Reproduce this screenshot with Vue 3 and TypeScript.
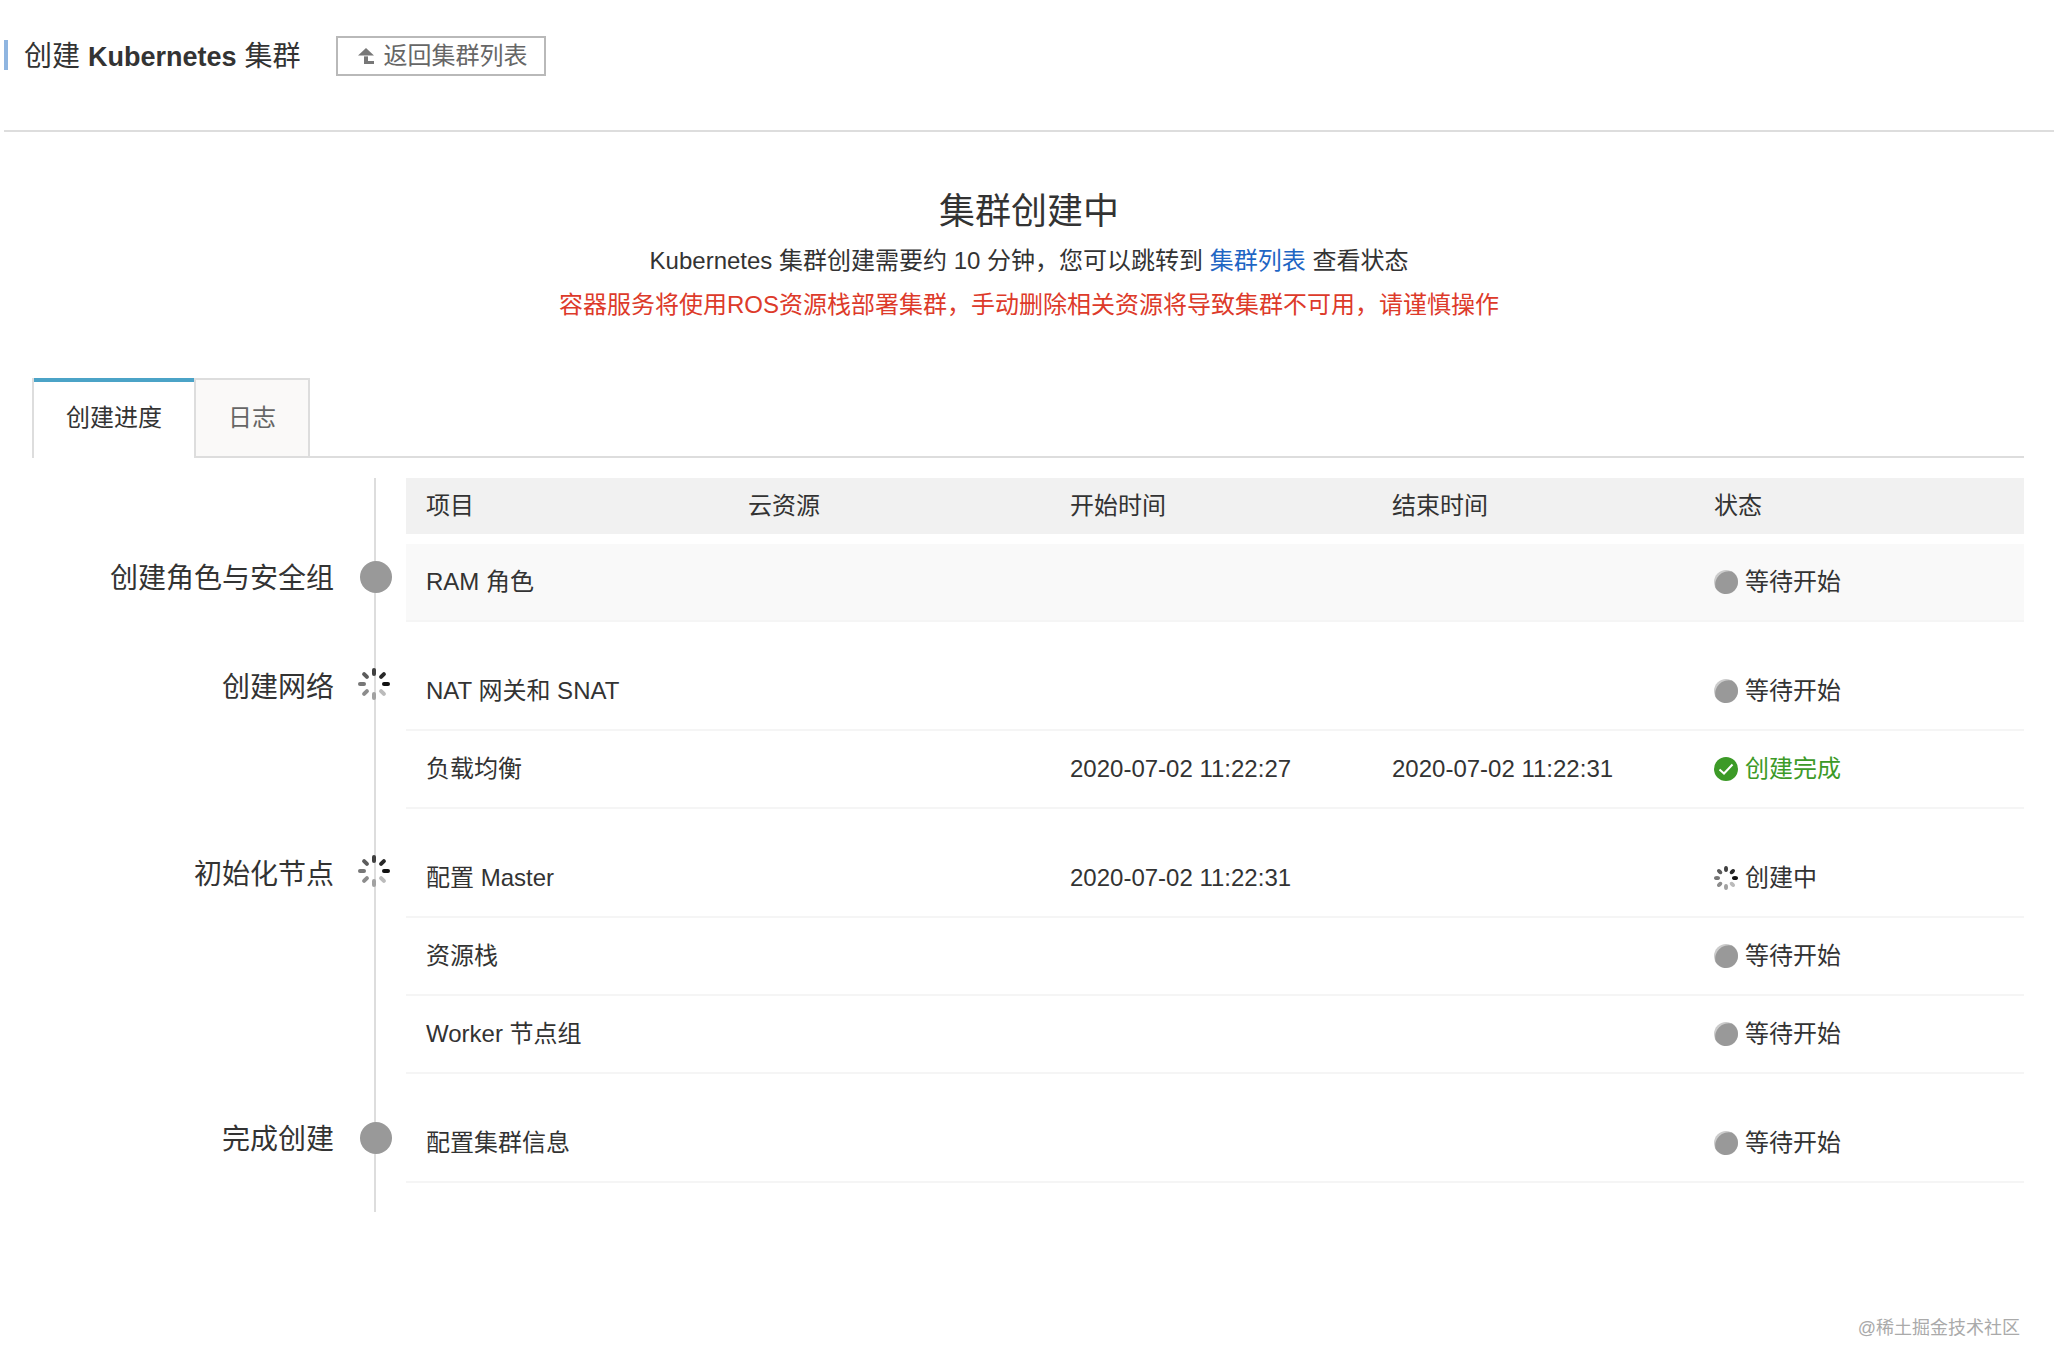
<script setup lang="ts">
import { ref } from 'vue'

type Status = 'waiting' | 'running' | 'done'

interface Item {
  name: string
  resource?: string
  start?: string
  end?: string
  status: Status
}

interface Stage {
  name: string
  status: Status
  items: Item[]
}

const statusText: Record<Status, string> = {
  waiting: '等待开始',
  running: '创建中',
  done: '创建完成',
}

const columns = ['项目', '云资源', '开始时间', '结束时间', '状态']

const stages: Stage[] = [
  { name: '创建角色与安全组', status: 'waiting', items: [{ name: 'RAM 角色', status: 'waiting' }] },
  {
    name: '创建网络',
    status: 'running',
    items: [
      { name: 'NAT 网关和 SNAT', status: 'waiting' },
      { name: '负载均衡', start: '2020-07-02 11:22:27', end: '2020-07-02 11:22:31', status: 'done' },
    ],
  },
  {
    name: '初始化节点',
    status: 'running',
    items: [
      { name: '配置 Master', start: '2020-07-02 11:22:31', status: 'running' },
      { name: '资源栈', status: 'waiting' },
      { name: 'Worker 节点组', status: 'waiting' },
    ],
  },
  { name: '完成创建', status: 'waiting', items: [{ name: '配置集群信息', status: 'waiting' }] },
]

const tabs = ['创建进度', '日志']
const activeTab = ref(0)

// Spinner blades, clockwise from the right-hand one
const blades = ['#111', '#bbb', '#a2a2a2', '#8c8c8c', '#777', '#5c5c5c', '#404040', '#282828']
</script>

<template>
  <div class="page">
    <header class="header">
      <h1 class="title">创建 <strong>Kubernetes</strong> 集群</h1>
      <button type="button" class="back">
        <svg width="16" height="16" viewBox="0 0 16 16" aria-hidden="true">
          <path d="M8 0 16 7.500H0Z" fill="#777" />
          <path d="M6 7H10V8.500H6Z" fill="#bbb" />
          <path d="M6 8.500H10V13H16V16H6Z" fill="#777" />
        </svg>
        返回集群列表
      </button>
    </header>

    <section class="intro">
      <h2 class="intro-title">集群创建中</h2>
      <p class="intro-line">Kubernetes 集群创建需要约 10 分钟，您可以跳转到 <a href="#clusters">集群列表</a> 查看状态</p>
      <p class="intro-line warning">容器服务将使用ROS资源栈部署集群，手动删除相关资源将导致集群不可用，请谨慎操作</p>
    </section>

    <main class="content">
      <div class="tabs" role="tablist">
        <button
          v-for="(tab, i) in tabs"
          :key="tab"
          type="button"
          role="tab"
          class="tab"
          :class="{ active: activeTab === i }"
          :aria-selected="activeTab === i"
          @click="activeTab = i"
        >{{ tab }}</button>
      </div>

      <div class="timeline">
        <table class="progress">
          <colgroup>
            <col class="col-stage" />
            <col class="col-marker" />
            <col v-for="n in 4" :key="n" class="col-data" />
            <col />
          </colgroup>
          <thead>
            <tr>
              <td></td>
              <td></td>
              <th v-for="column in columns" :key="column" scope="col">{{ column }}</th>
            </tr>
          </thead>
          <tbody v-for="(stage, s) in stages" :key="stage.name" :class="{ highlighted: s === 0 }">
            <tr v-for="(item, i) in stage.items" :key="item.name">
              <th v-if="i === 0" class="stage" scope="rowgroup" :rowspan="stage.items.length">{{ stage.name }}</th>
              <td v-if="i === 0" class="marker" :class="stage.status" :rowspan="stage.items.length">
                <svg v-if="stage.status === 'running'" width="32" height="32" viewBox="0 0 32 32" aria-hidden="true">
                  <rect
                    v-for="(color, b) in blades"
                    :key="b"
                    x="24"
                    y="14"
                    width="8"
                    height="4"
                    rx="2"
                    :fill="color"
                    :transform="`rotate(${b * 45} 16 16)`"
                  />
                </svg>
                <svg v-else width="32" height="32" viewBox="0 0 32 32" aria-hidden="true">
                  <circle cx="16" cy="16" r="16" fill="#999" />
                </svg>
              </td>
              <td class="cell">{{ item.name }}</td>
              <td class="cell">{{ item.resource }}</td>
              <td class="cell">{{ item.start }}</td>
              <td class="cell">{{ item.end }}</td>
              <td class="cell">
                <span class="status" :class="item.status">
                  <svg width="24" height="24" viewBox="0 0 24 24" aria-hidden="true">
                    <template v-if="item.status === 'waiting'">
                      <circle cx="12" cy="12" r="12" fill="#ccc" />
                      <path d="M18 1.600A12 12 0 1 1 1.600 18A13.500 13.500 0 0 1 18 1.600Z" fill="#999" />
                    </template>
                    <template v-else-if="item.status === 'done'">
                      <circle cx="12" cy="12" r="12" fill="#3c9a27" />
                      <path d="M5.500 12.500 10 16.500 18.500 7.500" fill="none" stroke="#fff" stroke-width="2" />
                    </template>
                    <template v-else>
                      <ellipse
                        v-for="(color, b) in blades"
                        :key="b"
                        cx="21"
                        cy="12"
                        rx="3"
                        ry="2"
                        :fill="color"
                        :transform="`rotate(${b * 45} 12 12)`"
                      />
                    </template>
                  </svg>
                  {{ statusText[item.status] }}
                </span>
              </td>
            </tr>
          </tbody>
        </table>
      </div>
    </main>

    <footer class="footer">@稀土掘金技术社区</footer>
  </div>
</template>

<style>
body {
  background: #fff;
}
</style>

<style scoped>
.page {
  color: #333;
  font-family: 'Liberation Sans', 'Noto Sans CJK SC', sans-serif;
  font-size: 24px;
  line-height: 36px;
}

button {
  font: inherit;
  cursor: pointer;
}

.header {
  display: flex;
  align-items: flex-start;
  gap: 35px;
  height: 94px;
  margin-left: 4px;
  padding-top: 36px;
  border-bottom: 2px solid #ddd;
}

.title {
  display: flex;
  align-items: center;
  gap: 8px;
  margin: 0;
  font-size: 28px;
  font-weight: 400;
  line-height: 42px;
}

.title::before {
  content: '';
  align-self: flex-start;
  width: 4px;
  height: 30px;
  margin: 4px 8px 0 0;
  background: #8fb5e0;
}

.title strong {
  font-size: 27px;
}

.back {
  display: flex;
  align-items: center;
  gap: 10px;
  height: 40px;
  padding: 0 16px 0 20px;
  border: 2px solid #b9b9b9;
  background: #fff;
  color: #666;
}

.intro {
  margin-left: 4px;
  padding: 53px 0 51px;
  text-align: center;
}

.intro-title {
  margin: 0;
  font-size: 36px;
  font-weight: 400;
  line-height: 54px;
}

.intro-line {
  margin: 0;
  line-height: 44px;
}

.intro-line a {
  color: #1f66c4;
  text-decoration: none;
}

.warning {
  color: #dd3a2a;
}

.content {
  margin: 0 30px 0 32px;
}

.tabs {
  display: flex;
}

.tabs::after {
  content: '';
  flex: 1;
  border-bottom: 2px solid #ddd;
}

.tab {
  height: 80px;
  padding: 0 32px;
  border: 2px solid #ddd;
  background: #faf9f8;
  color: #666;
}

.tab.active {
  border-width: 0 0 0 2px;
  background: #fff;
  box-shadow: inset 0 4px #4ba3c7;
  color: #333;
}

.timeline {
  position: relative;
  margin-top: 20px;
  padding-bottom: 29px;
}

.timeline::before {
  content: '';
  position: absolute;
  top: 0;
  bottom: 0;
  left: 342px;
  width: 2px;
  background: #ddd;
}

.progress {
  position: relative;
  width: 100%;
  table-layout: fixed;
  border-collapse: separate;
  border-spacing: 0;
}

.col-stage {
  width: 302px;
}

.col-marker {
  width: 72px;
}

.col-data {
  width: 16.165%;
}

th,
td {
  box-sizing: border-box;
  padding: 0;
  font-weight: 400;
  text-align: left;
}

thead th {
  height: 56px;
  padding-left: 20px;
  background: #f1f1f1;
}

.cell {
  height: 78px;
  padding-left: 20px;
  border-bottom: 2px solid #f5f5f5;
  background-clip: padding-box;
}

tbody tr:first-child > * {
  border-top: 31px solid transparent;
}

tbody tr:first-child > .cell {
  height: 109px;
}

tbody.highlighted tr:first-child > * {
  border-top-width: 10px;
}

tbody.highlighted tr:first-child > .cell {
  height: 88px;
  background-color: #f9f9f9;
}

.stage {
  padding-top: 15px;
  font-size: 28px;
  line-height: 40px;
  text-align: right;
  vertical-align: top;
}

.marker {
  padding: 17px 0 0 26px;
  vertical-align: top;
}

.marker.running {
  padding: 15px 0 0 24px;
}

.marker svg {
  display: block;
}

.status {
  display: flex;
  align-items: center;
  gap: 7px;
}

.status.done {
  color: #3c9a27;
}

.footer {
  padding: 98px 34px 26px;
  color: #aaa;
  font-size: 18px;
  text-align: right;
}
</style>
